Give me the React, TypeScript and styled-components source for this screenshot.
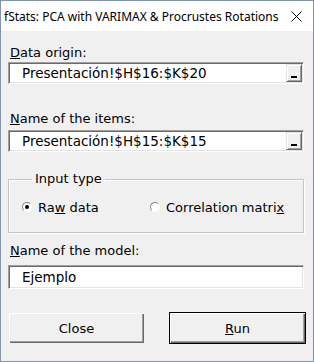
import React from "react";
import styled, { createGlobalStyle } from "styled-components";

const Global = createGlobalStyle`
  html, body { margin: 0; padding: 0; background: #f0f0f0; }
  * { box-sizing: border-box; }
`;

const Window = styled.div`
  width: 314px;
  height: 362px;
  border: 1px solid #8494a7;
  background: #f0f0f0;
  display: flex;
  flex-direction: column;
  font-family: "DejaVu Sans", "Noto Sans", sans-serif;
  color: #000;
`;

const TitleBar = styled.div`
  height: 30px;
  flex: none;
  background: #fff;
  display: flex;
  align-items: center;
  justify-content: space-between;
  padding: 0 11px 0 3px;
  font-family: "Noto Sans", "Open Sans", sans-serif;
  font-size: 12px;
`;

const Body = styled.div`
  flex: 1;
  display: flex;
  flex-direction: column;
  padding: 0 9px 0 7px;
  font-size: 13px;
`;

const Label = styled.div<{ $top: number }>`
  margin-top: ${(p) => p.$top}px;
  height: 18px;
  line-height: 18px;
  padding-left: 2px;
  flex: none;
`;

const TextBox = styled.div<{ $top: number; $h: number }>`
  margin-top: ${(p) => p.$top}px;
  height: ${(p) => p.$h}px;
  flex: none;
  background: #fff;
  border-top: 1px solid #a0a0a0;
  border-left: 1px solid #a0a0a0;
  border-right: 1px solid #fff;
  border-bottom: 1px solid #fff;
  box-shadow: inset 1px 1px 0 #696969, inset -1px -1px 0 #e3e3e3;
  display: flex;
  align-items: center;
  justify-content: space-between;
  padding-left: 13px;
  font-size: 13.5px;
`;

const PickButton = styled.div`
  width: 16px;
  height: 18px;
  margin-right: 1px;
  background: #f0f0f0;
  border-top: 1px solid #e3e3e3;
  border-left: 1px solid #e3e3e3;
  border-right: 1px solid #696969;
  border-bottom: 1px solid #696969;
  box-shadow: inset 1px 1px 0 #fff, inset -1px -1px 0 #a0a0a0;
  display: flex;
  align-items: flex-end;
  justify-content: center;
  padding-bottom: 3px;
`;

const Dash = styled.div`
  width: 6px;
  height: 2px;
  background: #000;
`;

const Group = styled.fieldset`
  margin: 19px 0 0 0;
  padding: 0 0 0 13px;
  height: 62px;
  flex: none;
  border: 1px solid #c4c4c4;
  box-shadow: inset 1px 1px 0 #fff, 1px 1px 0 #fff;
  font-size: 13px;
  min-width: 0;
`;

const Legend = styled.legend`
  padding: 0 3px;
  margin-left: 10px;
  height: 16px;
  line-height: 16px;
  font-size: 13px;
`;

const RadioLine = styled.div`
  display: flex;
  align-items: center;
  height: 40px;
`;

const RadioRow = styled.label<{ $w: number }>`
  width: ${(p) => p.$w}px;
  display: flex;
  align-items: center;
  gap: 6px;
`;

const RadioDot = styled.span<{ $on?: boolean }>`
  width: 10px;
  height: 10px;
  border-radius: 50%;
  background: #fff;
  border: 1px solid;
  border-color: #808080 #fff #fff #808080;
  display: flex;
  align-items: center;
  justify-content: center;
  &::after {
    content: "";
    width: 4px;
    height: 4px;
    border-radius: 50%;
    background: ${(p) => (p.$on ? "#000" : "transparent")};
  }
`;

const Buttons = styled.div`
  margin-top: 23px;
  margin-right: -2px;
  display: flex;
  justify-content: space-between;
  flex: none;
`;

const Btn = styled.div<{ $default?: boolean }>`
  width: 137px;
  height: 32px;
  display: flex;
  align-items: center;
  justify-content: center;
  font-size: 13px;
  background: #f0f0f0;
  border: 1px solid ${(p) => (p.$default ? "#000" : "transparent")};
  box-shadow: inset 1px 1px 0 #fff, inset -1px -1px 0 #696969,
    inset -2px -2px 0 #a0a0a0;
`;

const CloseIcon = () => (
  <svg width="11" height="11" viewBox="0 0 11 11">
    <path d="M0.5 0.5 L10.5 10.5 M10.5 0.5 L0.5 10.5" stroke="#000" strokeWidth="1" />
  </svg>
);

export default function App() {
  return (
    <>
      <Global />
      <Window>
        <TitleBar>
          <span>fStats: PCA with VARIMAX &amp; Procrustes Rotations</span>
          <CloseIcon />
        </TitleBar>
        <Body>
          <Label $top={13}>
            <u>D</u>ata origin:
          </Label>
          <TextBox $top={0} $h={22}>
            <span>Presentación!$H$16:$K$20</span>
            <PickButton>
              <Dash />
            </PickButton>
          </TextBox>
          <Label $top={26}>
            <u>N</u>ame of the items:
          </Label>
          <TextBox $top={2} $h={22}>
            <span>Presentación!$H$15:$K$15</span>
            <PickButton>
              <Dash />
            </PickButton>
          </TextBox>
          <Group>
            <Legend>Input type</Legend>
            <RadioLine>
              <RadioRow $w={128}>
                <RadioDot $on />
                <span>
                  Ra<u>w</u> data
                </span>
              </RadioRow>
              <RadioRow $w={150}>
                <RadioDot />
                <span>
                  Correlation matri<u>x</u>
                </span>
              </RadioRow>
            </RadioLine>
          </Group>
          <Label $top={9}>
            <u>N</u>ame of the model:
          </Label>
          <TextBox $top={5} $h={24}>
            <span>Ejemplo</span>
          </TextBox>
          <Buttons>
            <Btn>Close</Btn>
            <Btn $default>
              <span>
                <u>R</u>un
              </span>
            </Btn>
          </Buttons>
        </Body>
      </Window>
    </>
  );
}
